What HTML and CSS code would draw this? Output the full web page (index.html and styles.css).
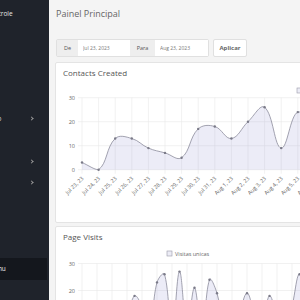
FILE: index.html
```html
<!DOCTYPE html>
<html lang="pt">
<head>
    <meta charset="UTF-8">
    <meta name="viewport" content="width=device-width, initial-scale=1.0">
    <title>Painel Principal</title>
    <link rel="stylesheet" href="styles.css">
</head>
<body>
    <aside class="sidebar">
        <div class="sidebar-inner">
            <div class="brand">Painel de Controle</div>
            <ul class="nav">
                <li>Início</li>
                <li>Contatos</li>
                <li>Visitas</li>
                <li class="has-sub">Gerir Relatório <span class="chev"></span></li>
                <li>Páginas</li>
                <li class="has-sub">Usuários <span class="chev"></span></li>
                <li class="has-sub">Ajustes <span class="chev"></span></li>
                <li>Ajuda</li>
                <li>Perfil</li>
                <li>Logs</li>
                <li class="active">Gerenciar Menu</li>
            </ul>
        </div>
    </aside>
    <main class="main">
        <h1 class="page-title">Painel Principal</h1>
        <form class="filter">
            <div class="group">
                <label class="addon addon-de" for="date_from">De</label>
                <input class="date-input from" type="text" id="date_from" value="Jul 23, 2023">
                <label class="addon addon-para" for="date_to">Para</label>
                <input class="date-input to" type="text" id="date_to" value="Aug 23, 2023">
            </div>
            <button class="btn" type="button">Aplicar</button>
        </form>
        <section class="card">
            <h2 class="card-title">Contacts Created</h2>
            <svg id="contacts_chart" class="chart" width="620" height="139"></svg>
        </section>
        <section class="card card-visits">
            <h2 class="card-title">Page Visits</h2>
            <svg id="visits_chart" class="chart" width="620" height="150"></svg>
        </section>
    </main>
    <script>
        // Small hand-rolled line chart (Chart.js look, tension 0.4)
        const NS = 'http://www.w3.org/2000/svg';

        function el(tag, attrs, parent) {
            const node = document.createElementNS(NS, tag);
            for (const key in attrs) node.setAttribute(key, attrs[key]);
            parent.appendChild(node);
            return node;
        }

        function splinePoints(pts, top, bottom) {
            return pts.map(function(p, i) {
                const prev = pts[i - 1] || p;
                const next = pts[i + 1] || p;
                const d01 = Math.hypot(p.x - prev.x, p.y - prev.y);
                const d12 = Math.hypot(next.x - p.x, next.y - p.y);
                let s01 = d01 / (d01 + d12 || 1);
                let s12 = d12 / (d01 + d12 || 1);
                const fa = 0.4 * s01, fb = 0.4 * s12;
                const clamp = function(y) { return Math.max(top, Math.min(bottom, y)); };
                return {
                    x: p.x, y: p.y,
                    cpPrev: { x: p.x - fa * (next.x - prev.x), y: clamp(p.y - fa * (next.y - prev.y)) },
                    cpNext: { x: p.x + fb * (next.x - prev.x), y: clamp(p.y + fb * (next.y - prev.y)) }
                };
            });
        }

        function drawChart(svg, o) {
            const bottom = o.top + o.max * o.unit;
            const width = +svg.getAttribute('width');

            for (let v = 0; v <= o.max; v += 10) {
                const y = o.top + (o.max - v) * o.unit;
                el('line', { x1: o.left - 4, y1: y, x2: width, y2: y, class: 'grid' }, svg);
                el('text', { x: o.left - 7, y: y + 2, class: 'tick', 'text-anchor': 'end' }, svg).textContent = v;
            }
            for (let i = 0; i < o.data.length; i += o.gridEvery) {
                const x = o.left + i * o.step;
                el('line', { x1: x, y1: o.top, x2: x, y2: bottom + 4, class: 'grid' }, svg);
                if (o.labels) {
                    const lx = x + 2, ly = bottom + 9;
                    el('text', { x: lx, y: ly, class: 'tick', 'text-anchor': 'end',
                        transform: 'rotate(-45 ' + lx + ' ' + ly + ')' }, svg).textContent = o.labels[i];
                }
            }

            const pts = o.data.map(function(v, i) {
                return { x: o.left + i * o.step, y: o.top + (o.max - v) * o.unit };
            });
            const sp = splinePoints(pts, o.top, bottom);
            let d = 'M' + sp[0].x + ' ' + sp[0].y;
            for (let i = 1; i < sp.length; i++) {
                const a = sp[i - 1], b = sp[i];
                d += ' C' + a.cpNext.x + ' ' + a.cpNext.y + ' ' + b.cpPrev.x + ' ' + b.cpPrev.y + ' ' + b.x + ' ' + b.y;
            }
            const last = sp[sp.length - 1];
            el('path', { d: d + ' L' + last.x + ' ' + bottom + ' L' + sp[0].x + ' ' + bottom + ' Z', class: 'area' }, svg);
            el('path', { d: d, class: 'line' }, svg);
            pts.forEach(function(p) {
                el('circle', { cx: p.x, cy: p.y, r: 1.2, class: 'dot' }, svg);
            });

            el('rect', { x: o.legend.x, y: o.legend.y, width: 5, height: 5, class: 'legend-box' }, svg);
            el('text', { x: o.legend.x + 8, y: o.legend.y + 4.5, class: 'tick' }, svg).textContent = o.legend.text;
        }

        const months = ['Jan', 'Feb', 'Mar', 'Apr', 'May', 'Jun', 'Jul', 'Aug', 'Sep', 'Oct', 'Nov', 'Dec'];
        const labels = [];
        for (let i = 0; i < 32; i++) {
            const day = new Date(2023, 6, 23 + i);
            labels.push(months[day.getMonth()] + ' ' + day.getDate() + ', 23');
        }

        drawChart(document.getElementById('contacts_chart'), {
            data: [3, 0, 13, 13, 9, 7, 5, 17, 18, 13, 20, 26, 9, 24, 15, 11, 17, 8, 12, 21, 14, 6, 10, 19, 23, 12, 7, 16, 20, 9, 13, 5],
            labels: labels,
            left: 26, top: 14.7, step: 16.6, max: 30, unit: 2.4, gridEvery: 1,
            legend: { x: 241, y: 5, text: 'Contatos criados' }
        });

        drawChart(document.getElementById('visits_chart'), {
            data: [6, 10, 4, 8, 12, 3, 9, 18, 14, 5, 23, 26, 4, 27, 6, 21, 3, 24, 19, 6, 2, 11, 19, 12, 8, 18, 10, 3, 14, 26, 12, 7],
            labels: null,
            left: 26, top: 16.5, step: 7.5, max: 30, unit: 2.7, gridEvery: 2,
            legend: { x: 111, y: 4, text: 'Visitas unicas' }
        });
    </script>
</body>
</html>
```

FILE: styles.css
```css
* {
    box-sizing: border-box;
}
body {
    font-family: "Open Sans", Arial, sans-serif;
    background-color: #f4f4f4;
    margin: 0;
    padding: 0;
    display: flex;
    height: 300px;
    overflow: hidden;
}
.sidebar {
    width: 49px;
    flex-shrink: 0;
    background-color: #1f232b;
    overflow: hidden;
}
.sidebar-inner {
    width: 150px;
    margin-left: -103px;
}
.brand {
    height: 28px;
    line-height: 28px;
    padding-left: 60px;
    font-size: 6.5px;
    color: #e6e6e6;
    white-space: nowrap;
}
.nav {
    list-style: none;
    margin: 15px 0 0;
    padding: 0;
}
.nav li {
    position: relative;
    display: flex;
    align-items: center;
    height: 21.5px;
    padding-left: 60px;
    font-size: 6.5px;
    color: #d8d8d8;
    white-space: nowrap;
}
.nav li.active {
    background-color: #14171d;
    color: #eee;
}
.chev {
    position: absolute;
    right: 14px;
    top: 9px;
    width: 3px;
    height: 3px;
    border-right: 1px solid #9a9a9a;
    border-bottom: 1px solid #9a9a9a;
    transform: rotate(-45deg);
}
.main {
    flex: 1;
    min-width: 0;
    padding-left: 6px;
    overflow: hidden;
}
.page-title {
    margin: 0;
    height: 28px;
    line-height: 28px;
    padding-left: 1px;
    font-size: 9px;
    font-weight: normal;
    color: #666;
}
.filter {
    display: flex;
    height: 18px;
    margin: 11px 0 0 1px;
}
.group {
    display: flex;
    border: 1px solid #e0e0e0;
    border-radius: 2px;
    background-color: #fff;
}
.addon {
    display: flex;
    align-items: center;
    justify-content: center;
    background-color: #eeeeee;
    font-size: 5.5px;
    color: #555;
}
.addon-de {
    width: 21px;
}
.addon-para {
    width: 25px;
}
.date-input {
    border: none;
    outline: none;
    padding: 0 0 0 5px;
    font-family: inherit;
    font-size: 5px;
    color: #777;
    background: #fff;
}
.date-input.from {
    width: 52px;
}
.date-input.to {
    width: 53px;
}
.btn {
    margin-left: 4px;
    width: 34px;
    padding: 0;
    border: 1px solid #e0e0e0;
    border-radius: 2px;
    background-color: #fff;
    font-family: inherit;
    font-size: 6px;
    font-weight: bold;
    color: #666;
}
.card {
    width: 620px;
    margin-top: 5px;
    background-color: #fff;
    border: 1px solid #e4e4e4;
    border-radius: 2px;
}
.card-visits {
    margin-top: 3px;
}
.card-title {
    margin: 0;
    height: 20px;
    line-height: 20px;
    padding-left: 7px;
    font-size: 8px;
    font-weight: normal;
    color: #555;
}
.chart {
    display: block;
}
.grid {
    stroke: #e8e8e8;
    stroke-width: 0.6;
}
.tick {
    font-family: "Open Sans", Arial, sans-serif;
    font-size: 5.5px;
    fill: #666;
}
.area {
    fill: rgba(140, 140, 210, 0.17);
    stroke: none;
}
.line {
    fill: none;
    stroke: #8c8c9c;
    stroke-width: 0.8;
}
.dot {
    fill: #7a7a88;
}
.legend-box {
    fill: #ececf6;
    stroke: #9a9aa8;
    stroke-width: 0.6;
}
```
